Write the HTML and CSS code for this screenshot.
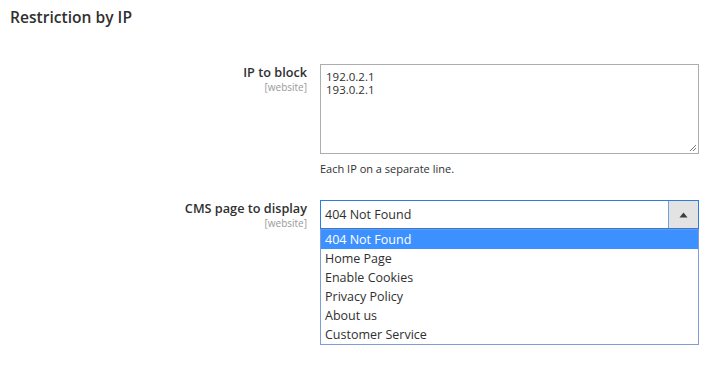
FILE: index.html
```html
<!DOCTYPE html>
<html>
<head>
<meta charset="utf-8">
<link rel="stylesheet" href="styles.css">
</head>
<body>
<div class="page">
  <h2 class="title">Restriction by IP</h2>
  <div class="form">
    <div class="row">
      <div class="label">
        <span class="label-text">IP to block</span>
        <span class="scope">[website]</span>
      </div>
      <div class="control">
        <div class="textarea">
          <div class="ta-line">192.0.2.1</div>
          <div class="ta-line">193.0.2.1</div>
          <svg class="grip" width="9" height="9" viewBox="0 0 9 9"><path d="M8 2 L2 8 M8 5 L5 8" stroke="#777" stroke-width="1" fill="none"/></svg>
        </div>
        <div class="note">Each IP on a separate line.</div>
      </div>
    </div>
    <div class="row row-cms">
      <div class="label">
        <span class="label-text">CMS page to display</span>
        <span class="scope">[website]</span>
      </div>
      <div class="control">
        <div class="select">
          <span class="select-value">404 Not Found</span>
          <span class="select-btn"><svg width="9" height="6" viewBox="0 0 9 6"><path d="M4.5 0.5 L8.5 5.5 L0.5 5.5 Z" fill="#3d3d3d"/></svg></span>
        </div>
        <ul class="options">
          <li class="option selected">404 Not Found</li>
          <li class="option">Home Page</li>
          <li class="option">Enable Cookies</li>
          <li class="option">Privacy Policy</li>
          <li class="option">About us</li>
          <li class="option">Customer Service</li>
        </ul>
      </div>
    </div>
  </div>
</div>
</body>
</html>
```

FILE: styles.css
```css
* { box-sizing: border-box; }
html, body { margin: 0; padding: 0; background: #fff; }
body {
  font-family: "Open Sans", "Liberation Sans", sans-serif;
  color: #303030;
  width: 725px;
  height: 381px;
  overflow: hidden;
}
.page { padding: 6px 0 0 10px; }
.title {
  margin: 0;
  font-size: 15.6px;
  font-weight: 600;
  line-height: 22px;
  color: #303030;
}
.form { margin-top: 36px; }
.row {
  display: grid;
  grid-template-columns: 297px 379px;
  column-gap: 13px;
}
.row-cms { margin-top: 24px; }
.label {
  display: flex;
  flex-direction: column;
  align-items: flex-end;
  text-align: right;
}
.label-text {
  font-size: 12.7px;
  font-weight: 600;
  line-height: 17px;
}
.scope {
  font-size: 10px;
  line-height: 12px;
  color: #999;
}
.control { display: flex; flex-direction: column; }
.textarea {
  position: relative;
  height: 90px;
  border: 1px solid #adadad;
  padding: 5px 5px;
  font-size: 11.5px;
  line-height: 13px;
  color: #303030;
}
.grip { position: absolute; right: 1px; bottom: 1px; }
.note {
  font-size: 11px;
  line-height: 15px;
  margin-top: 7px;
}
.select {
  display: flex;
  height: 29px;
  border: 1px solid #2b7de1;
  align-items: stretch;
}
.select-value {
  flex: 1;
  font-size: 12.5px;
  line-height: 27px;
  padding-left: 4px;
}
.select-btn {
  width: 30px;
  background: #e3e3e3;
  border-left: 1px solid #6fa0e0;
  display: flex;
  align-items: center;
  justify-content: center;
}
.options {
  list-style: none;
  margin: 0;
  padding: 0;
  border: 1px solid #7f9ed6;
  border-top-color: #6f97d8;
}
.option {
  height: 19px;
  line-height: 19px;
  font-size: 12.5px;
  padding-left: 4px;
  color: #303030;
}
.option.selected {
  background: #3d90ff;
  color: #fff;
}
```
